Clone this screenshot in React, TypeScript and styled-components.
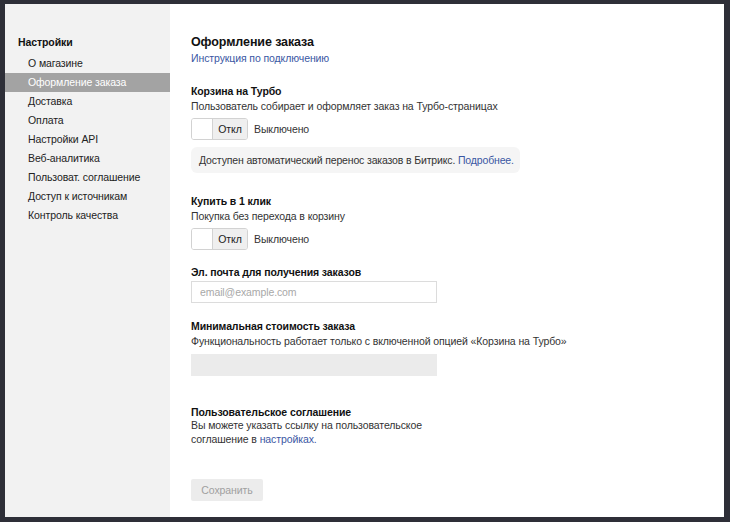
import React from 'react';
import styled, { createGlobalStyle } from 'styled-components';

const Global = createGlobalStyle`
  html, body {
    margin: 0;
    padding: 0;
    background: #2e2f38;
  }
  body {
    font-family: 'Liberation Sans', Arial, sans-serif;
    font-size: 10.5px;
    letter-spacing: -0.1px;
    color: #222;
  }
`;

const menu = [
  'О магазине',
  'Оформление заказа',
  'Доставка',
  'Оплата',
  'Настройки API',
  'Веб-аналитика',
  'Пользоват. соглашение',
  'Доступ к источникам',
  'Контроль качества',
];

function Toggle() {
  return (
    <ToggleRow>
      <Switch>
        <Knob />
        <SwitchLabel>Откл</SwitchLabel>
      </Switch>
      <State>Выключено</State>
    </ToggleRow>
  );
}

function App() {
  return (
    <>
      <Global />
      <Frame>
        <Panel>
          <Sidebar>
            <SideTitle>Настройки</SideTitle>
            {menu.map((item) => (
              <MenuItem key={item} active={item === 'Оформление заказа'}>
                {item}
              </MenuItem>
            ))}
          </Sidebar>

          <Main>
            <PageTitle>Оформление заказа</PageTitle>
            <Link href='#'>Инструкция по подключению</Link>

            <Section top={18}>
              <Heading>Корзина на Турбо</Heading>
              <Text>Пользователь собирает и оформляет заказ на Турбо-страницах</Text>
              <Toggle />
              <Note>
                Доступен автоматический перенос заказов в Битрикс.{' '}
                <Link href='#'>Подробнее.</Link>
              </Note>
            </Section>

            <Section top={21}>
              <Heading>Купить в 1 клик</Heading>
              <Text>Покупка без перехода в корзину</Text>
              <Toggle />
            </Section>

            <Section top={15}>
              <Heading>Эл. почта для получения заказов</Heading>
              <Input placeholder='email@example.com' />
            </Section>

            <Section top={16}>
              <Heading>Минимальная стоимость заказа</Heading>
              <Text>Функциональность работает только с включенной опцией «Корзина на Турбо»</Text>
              <DisabledField />
            </Section>

            <Section top={29}>
              <Heading>Пользовательское соглашение</Heading>
              <Text tight>
                Вы можете указать ссылку на пользовательское
                <br />
                соглашение в <Link href='#'>настройках.</Link>
              </Text>
            </Section>

            <SaveButton disabled>Сохранить</SaveButton>
          </Main>
        </Panel>
      </Frame>
    </>
  );
}

const Frame = styled.div`
  box-sizing: border-box;
  height: 522px;
  padding: 4px 6px 5px 5px;
`;

const Panel = styled.div`
  display: flex;
  height: 100%;
  background: #fff;
`;

const Sidebar = styled.nav`
  width: 165px;
  flex-shrink: 0;
  background: #f2f2f2;
  padding-top: 30px;
`;

const SideTitle = styled.div`
  font-size: 10.5px;
  font-weight: bold;
  line-height: 16px;
  color: #111;
  padding-left: 13px;
  margin-bottom: 4px;
`;

const MenuItem = styled.div<{ active?: boolean }>`
  height: 19px;
  line-height: 19px;
  padding-left: 23px;
  color: ${(p) => (p.active ? '#fff' : '#222')};
  background: ${(p) => (p.active ? '#a3a3a3' : 'transparent')};
`;

const Main = styled.main`
  flex: 1;
  padding: 29px 0 0 21px;
  display: flex;
  flex-direction: column;
  align-items: flex-start;
`;

const PageTitle = styled.h1`
  margin: 0;
  font-size: 12.5px;
  line-height: 18px;
  font-weight: bold;
  color: #111;
`;

const Link = styled.a`
  color: #3a57a3;
  text-decoration: none;
  line-height: 15px;
`;

const Section = styled.section<{ top: number }>`
  margin-top: ${(p) => p.top}px;
  display: flex;
  flex-direction: column;
  align-items: flex-start;
`;

const Heading = styled.div`
  line-height: 15px;
  font-weight: bold;
  color: #111;
`;

const Text = styled.div<{ tight?: boolean }>`
  line-height: 13px;
  color: #333;
  margin-top: ${(p) => (p.tight ? '-1px' : '1px')};
`;

const ToggleRow = styled.div`
  display: flex;
  align-items: center;
  gap: 6px;
  margin-top: 5px;
`;

const Switch = styled.div`
  display: flex;
  width: 57px;
  height: 22px;
  box-sizing: border-box;
  border: 1px solid #d2d2d2;
  border-radius: 3px;
  overflow: hidden;
`;

const Knob = styled.div`
  width: 20px;
  background: #fff;
  border-right: 1px solid #d2d2d2;
`;

const SwitchLabel = styled.div`
  flex: 1;
  text-align: center;
  background: #efefef;
  line-height: 20px;
  color: #222;
`;

const State = styled.span`
  color: #333;
`;

const Note = styled.div`
  margin-top: 7px;
  padding: 0 6px 0 8px;
  height: 26px;
  line-height: 26px;
  border-radius: 6px;
  background: #f5f5f5;
  color: #333;
  letter-spacing: -0.15px;
`;

const Input = styled.input`
  margin-top: 1px;
  width: 246px;
  height: 22px;
  box-sizing: border-box;
  border: 1px solid #dcdcdc;
  padding: 0 8px;
  font-family: inherit;
  font-size: 10.5px;
  letter-spacing: -0.1px;
  outline: none;
  &::placeholder {
    color: #a8a8a8;
  }
`;

const DisabledField = styled.div`
  margin-top: 6px;
  width: 246px;
  height: 22px;
  background: #ebebeb;
`;

const SaveButton = styled.button`
  margin-top: 32px;
  width: 72px;
  height: 22px;
  border: none;
  border-radius: 2px;
  background: #ececec;
  color: #a0a0a0;
  font-family: inherit;
  font-size: 10.5px;
  letter-spacing: -0.1px;
  padding: 0;
`;

export default App;
